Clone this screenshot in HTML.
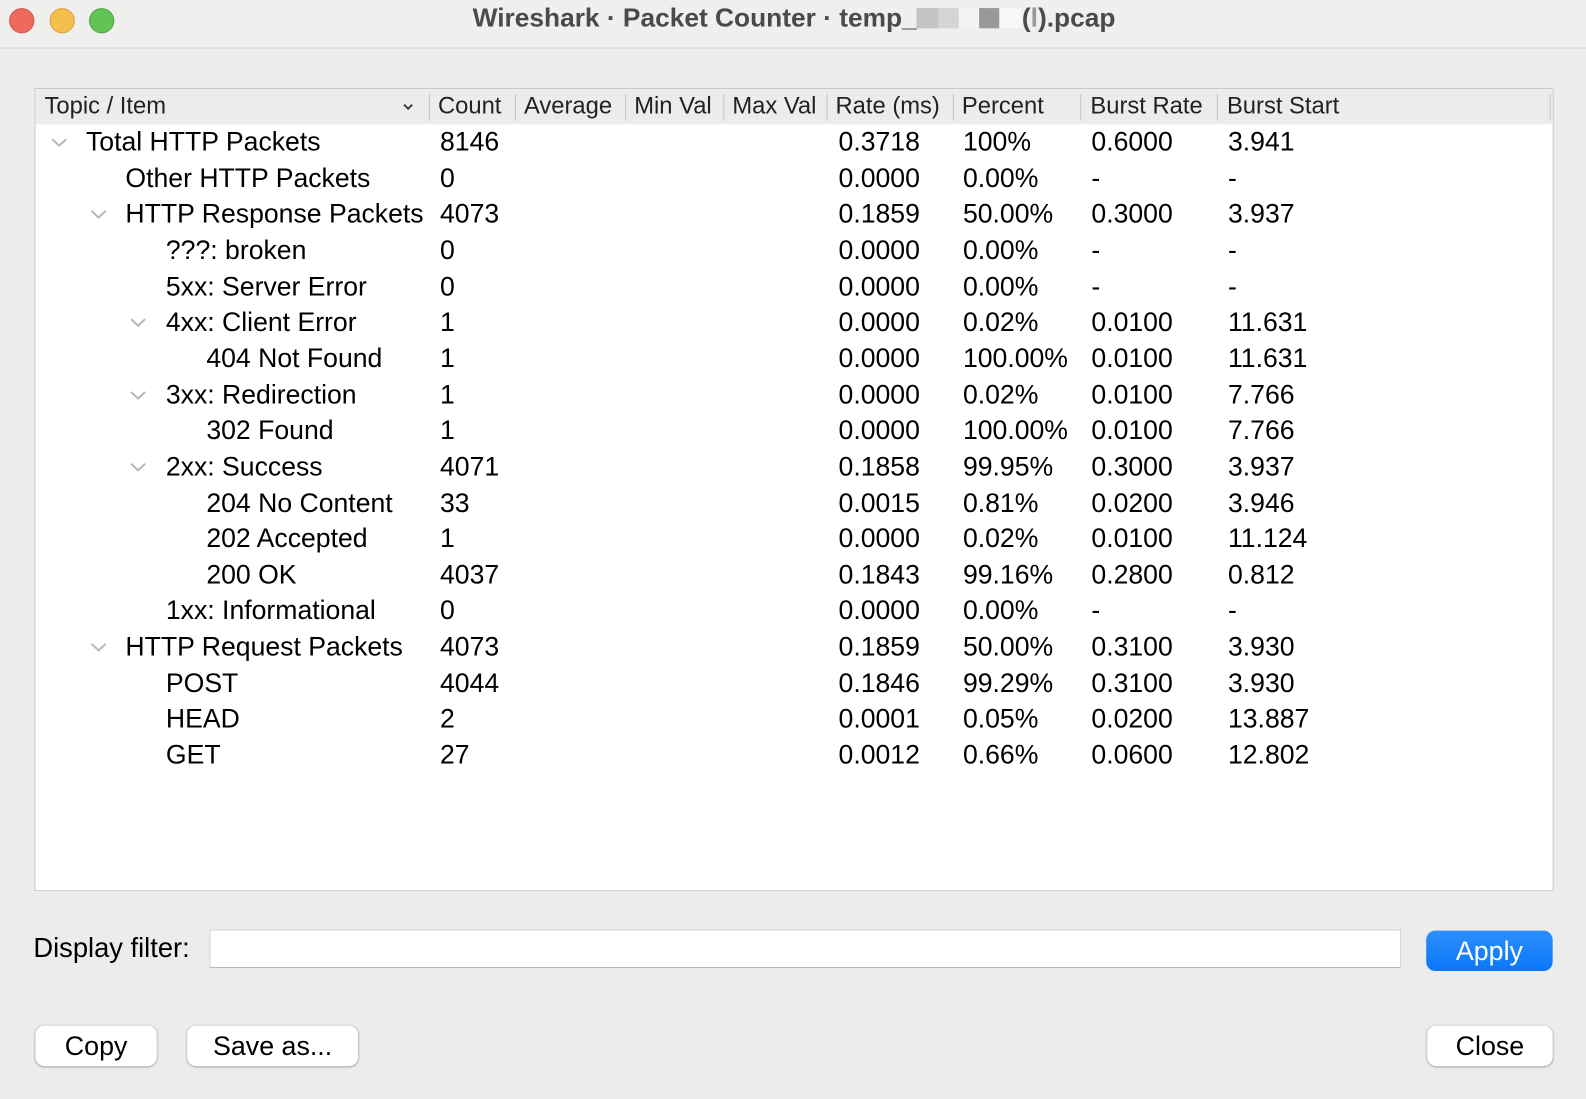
<!DOCTYPE html>
<html><head><meta charset="utf-8"><style>
*{margin:0;padding:0;box-sizing:border-box}
body{width:1586px;height:1098px;background:#ececec;font-family:"Liberation Sans",Arial,sans-serif;position:relative;overflow:hidden;color:#000}
#w{position:absolute;left:0;top:0;width:1568px;height:1086px;transform:scale(1.0115);transform-origin:0 0}
.tb{position:absolute;left:0;top:0;width:1568px;height:48px;background:#efefed;border-bottom:1px solid #d2d2d2}
.dot{position:absolute;top:8px;width:25px;height:25px;border-radius:50%}
.title{position:absolute;top:2px;left:0;width:1570px;text-align:center;font-weight:bold;font-size:26px;color:#4a4a4a}
.blk{display:inline-block;height:20px;vertical-align:-2px}
.tbl{position:absolute;left:34px;top:87px;width:1502px;height:794px;background:#fff;border:1px solid #c8c8c8}
.hdr{position:absolute;left:0;top:0;width:1500px;height:35px;background:#ececec;font-size:23.5px;color:#222}
.hdr span{position:absolute;top:3px}
.sep{position:absolute;top:5px;width:1px;height:26px;background:#c4c4c4}
.r{position:absolute;left:0;width:1500px;height:36px;font-size:26.3px}
.r span{position:absolute;top:2px;white-space:nowrap}
.chev{position:absolute;top:13px}
.btn{position:absolute;background:#fff;border-radius:9px;box-shadow:0 0.5px 2px rgba(0,0,0,.35);font-size:26.5px;text-align:center;line-height:40px;height:40px}
</style></head><body><div id="w">
<div class="tb">
<div class="dot" style="left:9px;background:#ee6a5f;border:1px solid #d35449"></div>
<div class="dot" style="left:49px;background:#f5bf4f;border:1px solid #d9a33a"></div>
<div class="dot" style="left:88px;background:#61c454;border:1px solid #4ea73f"></div>
<div class="title">Wireshark · Packet Counter · temp_<span class="blk" style="width:22px;background:#c4c4c4"></span><span class="blk" style="width:20px;background:#d4d4d4"></span><span class="blk" style="width:20px;background:#f4f4f4"></span><span class="blk" style="width:20px;background:#999"></span><span class="blk" style="width:22px;background:#f8f8f8"></span>(<span style="color:#999">l</span>).pcap</div>
</div>

<div class="tbl">
<div class="hdr">
<span style="left:9px">Topic / Item</span>
<svg style="position:absolute;left:363px;top:14px" width="11" height="8" viewBox="0 0 11 8"><path d="M1.5 1.5 L5.5 5.5 L9.5 1.5" fill="none" stroke="#333" stroke-width="1.8"/></svg>
<div class="sep" style="left:389px"></div><span style="left:398px">Count</span>
<div class="sep" style="left:474px"></div><span style="left:483px">Average</span>
<div class="sep" style="left:583px"></div><span style="left:592px">Min Val</span>
<div class="sep" style="left:680px"></div><span style="left:689px">Max Val</span>
<div class="sep" style="left:782px"></div><span style="left:791px">Rate (ms)</span>
<div class="sep" style="left:907px"></div><span style="left:916px">Percent</span>
<div class="sep" style="left:1033px"></div><span style="left:1043px">Burst Rate</span>
<div class="sep" style="left:1168px"></div><span style="left:1178px">Burst Start</span>
<div class="sep" style="left:1497px"></div>
</div>

<div class="r" style="top:35px"><svg class="chev" style="left:15px" width="17" height="10" viewBox="0 0 17 10"><path d="M1.5 1.5 L8.5 8 L15.5 1.5" fill="none" stroke="#b8b8b8" stroke-width="2"/></svg><span style="left:50px">Total HTTP Packets</span><span style="left:400px">8146</span><span style="left:794px">0.3718</span><span style="left:917px">100%</span><span style="left:1044px">0.6000</span><span style="left:1179px">3.941</span></div>
<div class="r" style="top:70.65px"><span style="left:89px">Other HTTP Packets</span><span style="left:400px">0</span><span style="left:794px">0.0000</span><span style="left:917px">0.00%</span><span style="left:1044px">-</span><span style="left:1179px">-</span></div>
<div class="r" style="top:106.3px"><svg class="chev" style="left:54px" width="17" height="10" viewBox="0 0 17 10"><path d="M1.5 1.5 L8.5 8 L15.5 1.5" fill="none" stroke="#b8b8b8" stroke-width="2"/></svg><span style="left:89px">HTTP Response Packets</span><span style="left:400px">4073</span><span style="left:794px">0.1859</span><span style="left:917px">50.00%</span><span style="left:1044px">0.3000</span><span style="left:1179px">3.937</span></div>
<div class="r" style="top:141.95px"><span style="left:129px">???: broken</span><span style="left:400px">0</span><span style="left:794px">0.0000</span><span style="left:917px">0.00%</span><span style="left:1044px">-</span><span style="left:1179px">-</span></div>
<div class="r" style="top:177.6px"><span style="left:129px">5xx: Server Error</span><span style="left:400px">0</span><span style="left:794px">0.0000</span><span style="left:917px">0.00%</span><span style="left:1044px">-</span><span style="left:1179px">-</span></div>
<div class="r" style="top:213.25px"><svg class="chev" style="left:93px" width="17" height="10" viewBox="0 0 17 10"><path d="M1.5 1.5 L8.5 8 L15.5 1.5" fill="none" stroke="#b8b8b8" stroke-width="2"/></svg><span style="left:129px">4xx: Client Error</span><span style="left:400px">1</span><span style="left:794px">0.0000</span><span style="left:917px">0.02%</span><span style="left:1044px">0.0100</span><span style="left:1179px">11.631</span></div>
<div class="r" style="top:248.9px"><span style="left:169px">404 Not Found</span><span style="left:400px">1</span><span style="left:794px">0.0000</span><span style="left:917px">100.00%</span><span style="left:1044px">0.0100</span><span style="left:1179px">11.631</span></div>
<div class="r" style="top:284.55px"><svg class="chev" style="left:93px" width="17" height="10" viewBox="0 0 17 10"><path d="M1.5 1.5 L8.5 8 L15.5 1.5" fill="none" stroke="#b8b8b8" stroke-width="2"/></svg><span style="left:129px">3xx: Redirection</span><span style="left:400px">1</span><span style="left:794px">0.0000</span><span style="left:917px">0.02%</span><span style="left:1044px">0.0100</span><span style="left:1179px">7.766</span></div>
<div class="r" style="top:320.2px"><span style="left:169px">302 Found</span><span style="left:400px">1</span><span style="left:794px">0.0000</span><span style="left:917px">100.00%</span><span style="left:1044px">0.0100</span><span style="left:1179px">7.766</span></div>
<div class="r" style="top:355.85px"><svg class="chev" style="left:93px" width="17" height="10" viewBox="0 0 17 10"><path d="M1.5 1.5 L8.5 8 L15.5 1.5" fill="none" stroke="#b8b8b8" stroke-width="2"/></svg><span style="left:129px">2xx: Success</span><span style="left:400px">4071</span><span style="left:794px">0.1858</span><span style="left:917px">99.95%</span><span style="left:1044px">0.3000</span><span style="left:1179px">3.937</span></div>
<div class="r" style="top:391.5px"><span style="left:169px">204 No Content</span><span style="left:400px">33</span><span style="left:794px">0.0015</span><span style="left:917px">0.81%</span><span style="left:1044px">0.0200</span><span style="left:1179px">3.946</span></div>
<div class="r" style="top:427.15px"><span style="left:169px">202 Accepted</span><span style="left:400px">1</span><span style="left:794px">0.0000</span><span style="left:917px">0.02%</span><span style="left:1044px">0.0100</span><span style="left:1179px">11.124</span></div>
<div class="r" style="top:462.8px"><span style="left:169px">200 OK</span><span style="left:400px">4037</span><span style="left:794px">0.1843</span><span style="left:917px">99.16%</span><span style="left:1044px">0.2800</span><span style="left:1179px">0.812</span></div>
<div class="r" style="top:498.45px"><span style="left:129px">1xx: Informational</span><span style="left:400px">0</span><span style="left:794px">0.0000</span><span style="left:917px">0.00%</span><span style="left:1044px">-</span><span style="left:1179px">-</span></div>
<div class="r" style="top:534.1px"><svg class="chev" style="left:54px" width="17" height="10" viewBox="0 0 17 10"><path d="M1.5 1.5 L8.5 8 L15.5 1.5" fill="none" stroke="#b8b8b8" stroke-width="2"/></svg><span style="left:89px">HTTP Request Packets</span><span style="left:400px">4073</span><span style="left:794px">0.1859</span><span style="left:917px">50.00%</span><span style="left:1044px">0.3100</span><span style="left:1179px">3.930</span></div>
<div class="r" style="top:569.75px"><span style="left:129px">POST</span><span style="left:400px">4044</span><span style="left:794px">0.1846</span><span style="left:917px">99.29%</span><span style="left:1044px">0.3100</span><span style="left:1179px">3.930</span></div>
<div class="r" style="top:605.4px"><span style="left:129px">HEAD</span><span style="left:400px">2</span><span style="left:794px">0.0001</span><span style="left:917px">0.05%</span><span style="left:1044px">0.0200</span><span style="left:1179px">13.887</span></div>
<div class="r" style="top:641.05px"><span style="left:129px">GET</span><span style="left:400px">27</span><span style="left:794px">0.0012</span><span style="left:917px">0.66%</span><span style="left:1044px">0.0600</span><span style="left:1179px">12.802</span></div>
</div>

<div style="position:absolute;left:33px;top:922px;font-size:27px">Display filter:</div>
<div style="position:absolute;left:207px;top:919px;width:1178px;height:38px;background:#fff;border:1px solid #d4d4d4;border-bottom:1.5px solid #b8b8b8"></div>
<div class="btn" style="left:1410px;top:920px;width:125px;background:linear-gradient(#2d8ffc,#0a77fb);color:#fff;box-shadow:none">Apply</div>
<div class="btn" style="left:35px;top:1014px;width:120px">Copy</div>
<div class="btn" style="left:185px;top:1014px;width:169px">Save as...</div>
<div class="btn" style="left:1411px;top:1014px;width:124px">Close</div>
</div></body></html>
